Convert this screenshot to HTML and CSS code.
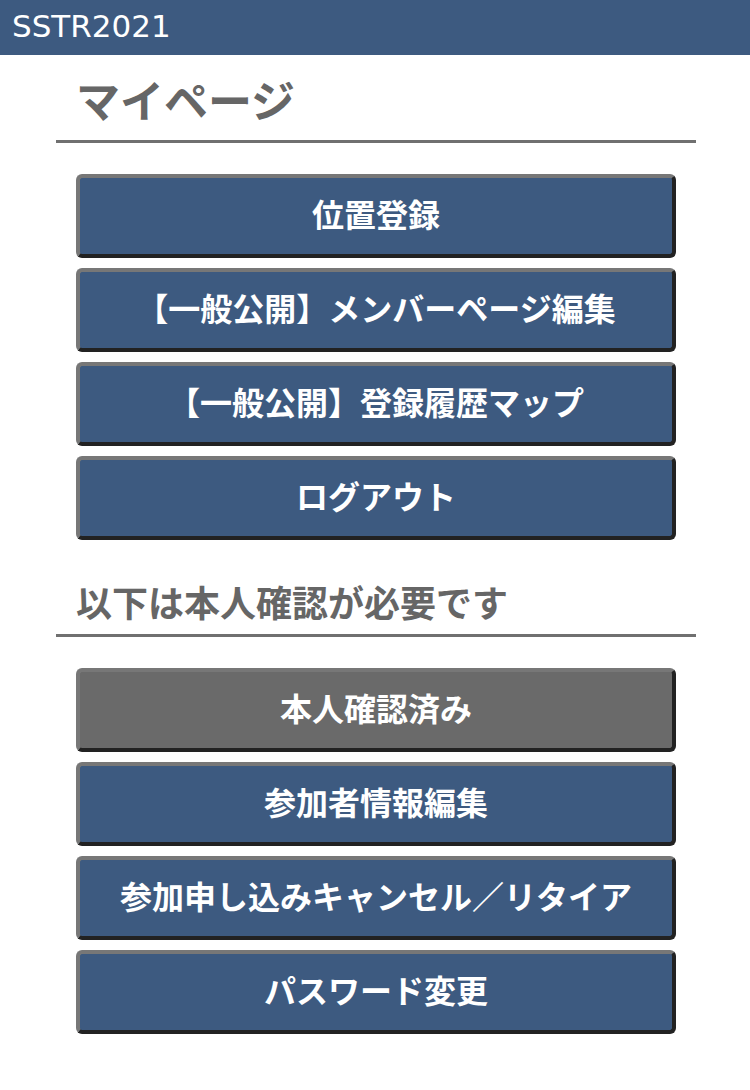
FILE: index.html
```html
<!DOCTYPE html>
<html lang="ja">
<head>
    <meta charset="UTF-8">
    <title>マイページ - SSTR2021</title>
    <link rel="stylesheet" href="styles.css">
</head>
<body>
    <header class="site-header">SSTR2021</header>

    <main class="page">
        <h2 class="page-title">マイページ</h2>
        <nav class="menu">
            <a class="menu-btn" href="#">位置登録</a>
            <a class="menu-btn" href="#">【一般公開】メンバーページ編集</a>
            <a class="menu-btn" href="#">【一般公開】登録履歴マップ</a>
            <a class="menu-btn" href="#">ログアウト</a>
        </nav>

        <h3 class="section-title">以下は本人確認が必要です</h3>
        <nav class="menu">
            <a class="menu-btn done" href="#">本人確認済み</a>
            <a class="menu-btn" href="#">参加者情報編集</a>
            <a class="menu-btn" href="#">参加申し込みキャンセル／リタイア</a>
            <a class="menu-btn" href="#">パスワード変更</a>
        </nav>
    </main>
</body>
</html>
```

FILE: styles.css
```css
body {
    margin: 0;
    font-family: "Noto Sans CJK JP", "Noto Sans", sans-serif;
    background: #fff;
}
.site-header {
    height: 55px;
    line-height: 53px;
    padding-left: 12px;
    background: #3d5a80;
    color: #fff;
    font-family: "DejaVu Sans", "Noto Sans CJK JP", sans-serif;
    font-size: 31px;
}
.page {
    width: 640px;
    margin-left: 56px;
}
.page-title,
.section-title {
    margin: 0;
    padding-left: 20px;
    color: #666;
    font-weight: 700;
    border-bottom: 3px solid #707070;
}
.page-title {
    font-size: 44px;
    line-height: 60px;
    padding-top: 14px;
    padding-bottom: 11px;
}
.section-title {
    font-size: 36px;
    line-height: 50px;
    padding-top: 36px;
    padding-bottom: 8px;
}
.menu {
    display: flex;
    flex-direction: column;
    gap: 10px;
    margin: 31px 20px 0;
}
.menu-btn {
    display: block;
    height: 70px;
    line-height: 70px;
    padding-bottom: 6px;
    text-align: center;
    text-decoration: none;
    color: #fff;
    font-size: 32px;
    font-weight: 700;
    background: #3d5a80;
    border: 4px solid;
    border-color: #777 #222 #222 #777;
    border-radius: 6px;
}
.menu-btn.done {
    background: #6a6a6a;
}
```
